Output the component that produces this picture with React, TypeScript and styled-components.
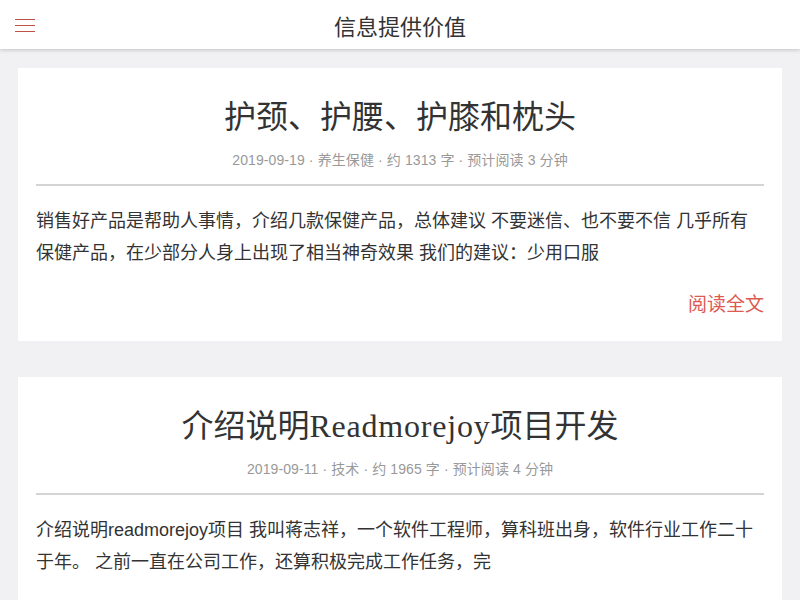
import React from "react";
import styled, { createGlobalStyle } from "styled-components";

const GlobalStyle = createGlobalStyle`
    html, body {
        margin: 0;
        padding: 0;
        background-color: #f1f1f3;
        font-family: "Liberation Sans", "Noto Sans CJK SC", sans-serif;
        color: #333;
    }
`;

const Page = styled.div`
    min-height: 100vh;
    background-color: #f1f1f3;
`;

const Header = styled.header`
    position: sticky;
    top: 0;
    z-index: 2;
    display: flex;
    align-items: center;
    justify-content: center;
    height: 49px;
    background-color: #fff;
    box-shadow: 0 1px 4px rgba(0, 0, 0, 0.2);
`;

const MenuButton = styled.button`
    position: absolute;
    left: 15px;
    top: 19px;
    display: flex;
    flex-direction: column;
    gap: 5px;
    width: 20px;
    padding: 0;
    border: 0;
    background: none;
    cursor: pointer;

    span {
        display: block;
        height: 1px;
        background-color: #bd5246;
    }
`;

const HeaderTitle = styled.h1`
    margin: 0;
    font-size: 22px;
    font-weight: 400;
    color: #333;
`;

const List = styled.main`
    display: flex;
    flex-direction: column;
    gap: 36px;
    padding: 19px 18px;
`;

const Card = styled.article`
    padding: 25px 18px 22px;
    background-color: #fff;
`;

const Title = styled.h2`
    margin: 0;
    font-size: 32px;
    line-height: 48px;
    font-weight: 400;
    text-align: center;
    color: #333;
`;

const Latin = styled.span`
    font-family: "Liberation Serif", serif;
    letter-spacing: 0.8px;
`;

const Meta = styled.div`
    margin-top: 9px;
    padding-bottom: 14px;
    border-bottom: 2px solid #d4d4d4;
    font-size: 14px;
    letter-spacing: 0.1px;
    line-height: 20px;
    text-align: center;
    color: #999;
`;

const Excerpt = styled.p`
    margin: 19px 0 0;
    font-size: 18px;
    line-height: 32px;
    color: #333;
`;

const ReadMore = styled.a`
    display: block;
    margin-top: 22px;
    font-size: 19px;
    line-height: 28px;
    text-align: right;
    color: #dc5a50;
    text-decoration: none;
`;

type Post = {
    title: React.ReactNode;
    date: string;
    category: string;
    words: number;
    minutes: number;
    excerpt: string;
};

const posts: Post[] = [
    {
        title: "护颈、护腰、护膝和枕头",
        date: "2019-09-19",
        category: "养生保健",
        words: 1313,
        minutes: 3,
        excerpt:
            "销售好产品是帮助人事情，介绍几款保健产品，总体建议 不要迷信、也不要不信 几乎所有保健产品，在少部分人身上出现了相当神奇效果 我们的建议：少用口服",
    },
    {
        title: (
            <>
                介绍说明<Latin>Readmorejoy</Latin>项目开发
            </>
        ),
        date: "2019-09-11",
        category: "技术",
        words: 1965,
        minutes: 4,
        excerpt:
            "介绍说明readmorejoy项目 我叫蒋志祥，一个软件工程师，算科班出身，软件行业工作二十于年。 之前一直在公司工作，还算积极完成工作任务，完",
    },
];

export default function App() {
    return (
        <Page>
            <GlobalStyle />
            <Header>
                <MenuButton type="button" aria-label="menu">
                    <span />
                    <span />
                    <span />
                </MenuButton>
                <HeaderTitle>信息提供价值</HeaderTitle>
            </Header>
            <List>
                {posts.map(post => (
                    <Card key={post.date}>
                        <Title>{post.title}</Title>
                        <Meta>
                            {post.date} · {post.category} · 约 {post.words} 字 · 预计阅读 {post.minutes} 分钟
                        </Meta>
                        <Excerpt>{post.excerpt}</Excerpt>
                        <ReadMore href="#">阅读全文</ReadMore>
                    </Card>
                ))}
            </List>
        </Page>
    );
}
